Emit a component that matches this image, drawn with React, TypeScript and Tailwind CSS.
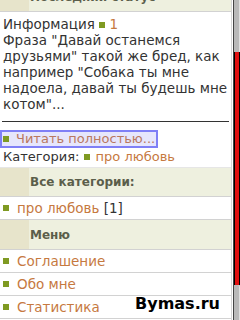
import React from 'react'

const sq = 'inline-block w-[6px] h-[6px] bg-[#7f9a22] align-middle'

function Header({ title, className = '' }: { title: string; className?: string }) {
  return (
    <div className={`flex h-[30px] border-b border-[#d2d2d2] ${className}`}>
      <div className="w-[29px] bg-[#e7e4cb]" />
      <div className="flex flex-1 items-center bg-[#eef0df] pl-[1px] text-[12px] font-bold text-[#5b5e4b]">
        {title}
      </div>
    </div>
  )
}

function Row({ children }: { children: React.ReactNode }) {
  return (
    <div className="flex h-[23px] items-center gap-[8px] border-b border-[#d2d2d2] pl-[3px] text-[13.5px]">
      <span className={sq} />
      {children}
    </div>
  )
}

function Scrollbar() {
  return (
    <div className="flex w-[7px] flex-col border-l border-[#444] bg-[#b9b9b9]">
      <div className="h-[52px] border-r border-[#e0e0e0]" />
      <div className="h-[233px] border-x border-black bg-[#e01010]" />
      <div className="flex-1 rounded-t-[2px] border-r border-[#e0e0e0]" />
    </div>
  )
}

export default function App() {
  return (
    <div
      className="relative flex h-[320px] w-[240px] overflow-hidden bg-white text-[#333]"
      style={{ fontFamily: '"DejaVu Sans", Verdana, sans-serif' }}
    >
      <div className="flex w-[232px] flex-col border-r border-[#d6d6d6]">
        <Header title="Последний статус" className="-mt-[18px]" />

        <div className="whitespace-nowrap pl-[3px] pt-[4px] text-[13.5px] leading-[16px]">
          <div>
            Информация <span className={sq} /> <span className="text-[#c6793f]">1</span>
          </div>
          <p>
            Фраза "Давай останемся
            <br />
            друзьями" такой же бред, как
            <br />
            например "Собака ты мне
            <br />
            надоела, давай ты будешь мне
            <br />
            котом"...
          </p>
        </div>

        <div className="mx-[2px] mt-[9px] w-[227px] border-t border-[#333]" />

        <div className="mt-[8px] flex h-[18px] w-[158px] items-center gap-[7px] border-2 border-[#7f7ff6] bg-[#e6e6fc] pl-[1px] text-[13px] text-[#b97860]">
          <span className={sq} />
          Читать полностью...
        </div>

        <div className="flex h-[17px] items-center pl-[3px] text-[13px] leading-[16px]">
          Категория:&nbsp;<span className={sq} />
          <span className="ml-[6px] text-[#c6793f]">про любовь</span>
        </div>

        <Header title="Все категории:" className="mt-[2px] border-t border-t-[#e6e6e6]" />
        <Row>
          <span>
            <span className="text-[#c6793f]">про любовь</span> [1]
          </span>
        </Row>

        <Header title="Меню" />
        <Row>
          <span className="text-[#c6793f]">Соглашение</span>
        </Row>
        <Row>
          <span className="text-[#c6793f]">Обо мне</span>
        </Row>
        <Row>
          <span className="text-[#c6793f]">Статистика</span>
        </Row>
      </div>
      <div className="w-[1px]" />
      <Scrollbar />

      <div className="absolute bottom-[4px] right-[20px] text-[16px] font-bold text-black">Bymas.ru</div>
    </div>
  )
}
